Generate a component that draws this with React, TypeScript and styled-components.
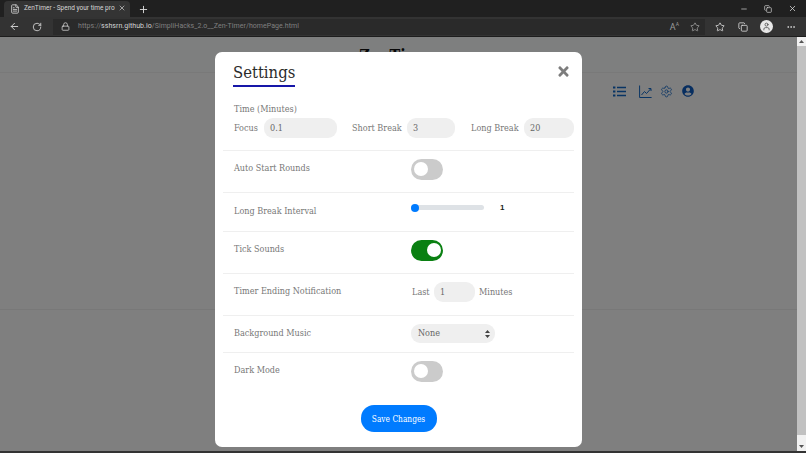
import React from "react";
import styled, { createGlobalStyle } from "styled-components";
import { ArrowLeft, RotateCw, Lock, FileText, Plus, X, Minus, Copy, Star, MoreHorizontal, Settings as Gear, User } from "lucide-react";
import { FaTimes, FaUserCircle } from "react-icons/fa";

const Global = createGlobalStyle`
  html, body { margin: 0; padding: 0; width: 806px; height: 453px; overflow: hidden; background: #808080; }
  * { box-sizing: border-box; }
`;

const slab = `"DejaVu Serif Condensed", "DejaVu Serif", serif`;

const Shell = styled.div`
  width: 806px; height: 453px; display: flex; flex-direction: column; font-family: ${slab};
`;
const TabBar = styled.div`
  height: 17px; background: #202020; display: flex; align-items: flex-end; padding-left: 4px; color: #ddd; flex: none;
`;
const Tab = styled.div`
  width: 126px; height: 16px; background: #343434; border-radius: 4px 4px 0 0; display: flex; align-items: flex-start;
  padding: 2px 6px 0; gap: 4px; font: 6.5px/10px "Roboto", sans-serif; color: #d6d6d6; white-space: nowrap; overflow: hidden;
  svg { margin-top: 1px; flex: none; }
`;
const TabTitle = styled.span`
  flex: none; width: 90px;
`;
const NewTab = styled.div`
  width: 26px; height: 15px; display: flex; align-items: center; justify-content: center;
`;
const WindowControls = styled.div`
  margin-left: auto; display: flex; align-self: stretch; align-items: center; gap: 16px; padding-right: 9px;
`;
const Toolbar = styled.div`
  height: 19px; background: #333; display: flex; align-items: center; color: #d8d8d8; flex: none;
`;
const NavIcons = styled.div`
  width: 53px; display: flex; gap: 12px; padding-left: 9px; align-items: center; flex: none;
`;
const AddressBar = styled.div`
  width: 652px; height: 16px; background: #2a2a2a; display: flex; align-items: center; gap: 8px; padding-left: 8px; flex: none;
`;
const Url = styled.span`
  font: 7px/12px "Roboto", sans-serif; color: #808080; white-space: nowrap; margin-top: -1px; letter-spacing: .05px;
  b { font-weight: 400; color: #d4d4d4; }
`;
const AddressActions = styled.div`
  margin-left: auto; display: flex; gap: 11px; padding-right: 5px; align-items: center; color: #9a9a9a;
  font: 9px "Roboto", sans-serif;
`;
const ReadAloud = styled.span`
  sup { font-size: 5px; line-height: 0; }
`;
const ToolActions = styled.div`
  flex: 1; display: flex; align-items: center; justify-content: space-between; padding: 0 10px 0 10px;
`;
const Avatar = styled.div`
  width: 13px; height: 13px; border-radius: 50%; background: #e8e8e8; color: #444; display: flex; align-items: center; justify-content: center;
`;
const Divider = styled.div`
  height: 1px; background: #1d1d1d; flex: none;
`;
const Viewport = styled.div`
  flex: 1; display: flex; min-height: 0; flex-direction: row;
`;
const Page = styled.div`
  position: relative; flex: 1; background: #fff; overflow: hidden; display: flex; flex-direction: column;
`;
const Header = styled.div`
  height: 36px; background: #fdfffe; border-bottom: 1px solid #f2f2f2; display: flex; justify-content: center; padding-top: 9px; flex: none;
`;
const Brand = styled.div`
  font: 700 16px/20px ${slab}; color: #111;
`;
const IconRow = styled.div`
  display: flex; justify-content: flex-end; align-items: flex-start; padding: 12px 103px 0 0; color: #1168c8; height: 236px; flex: none;
  svg { flex: none; }
`;
const PageIcon = styled.svg<{ $gap: number }>`
  width: 13px; height: 13px; margin-left: ${p => p.$gap}px; fill: none; stroke: currentColor;
`;
const GearSlot = styled.span`
  margin-left: 8px; display: flex;
`;
const UserSlot = styled.span`
  margin-left: 9px; display: flex; color: #0f5cc0;
`;
const FooterRule = styled.div`
  border-top: 1px solid #f0f0f0;
`;
const Overlay = styled.div`
  position: absolute; inset: 0; background: rgba(0, 0, 0, .5); display: flex; justify-content: center; padding: 15px 0 0 0;
`;
const Modal = styled.div`
  width: 367px; height: 395px; background: #fff; border-radius: 7px; display: flex; flex-direction: column; padding: 0 8px;
`;
const ModalHead = styled.div`
  display: flex; justify-content: space-between; align-items: flex-start; height: 47px; padding: 9px 3px 0 10px; flex: none;
`;
const Title = styled.h1`
  margin: 0; font: 400 16.5px/23px ${slab}; color: #2b2b2b; border-bottom: 2px solid #1616a8; height: 26px;
`;
const Close = styled.div`
  color: #7d7d7d; display: flex; margin-top: 3px;
`;
const TimeRow = styled.div`
  height: 52px; padding: 4px 0 0 11px; border-bottom: 1px solid #efefef; flex: none;
`;
const Label = styled.div`
  font: 400 9px/12px ${slab}; color: #777; white-space: nowrap;
`;
const TimeFields = styled.div`
  display: flex; align-items: center; margin-top: 3px;
`;
const FieldText = styled.span<{ $w: number; $pad?: number }>`
  font: 400 9px/12px ${slab}; color: #777; width: ${p => p.$w}px; padding-left: ${p => p.$pad ?? 0}px; flex: none; white-space: nowrap;
`;
const Input = styled.div<{ $w: number }>`
  width: ${p => p.$w}px; height: 20px; border-radius: 9px; background: #efefef; color: #666; font: 400 9px/20px ${slab};
  padding-left: 6px; flex: none;
`;
const Row = styled.div<{ $h: number; $last?: boolean }>`
  height: ${p => p.$h}px; display: grid; grid-template-columns: 188px 1fr; flex: none;
  border-bottom: ${p => (p.$last ? "none" : "1px solid #efefef")};
`;
const RowLabel = styled(Label)<{ $top: number }>`
  padding: ${p => p.$top}px 0 0 11px;
`;
const RowControl = styled.div<{ $top: number }>`
  padding-top: ${p => p.$top}px; display: flex; align-items: flex-start;
`;
const Switch = styled.div<{ $on?: boolean }>`
  width: 32px; height: 21px; border-radius: 11px; background: ${p => (p.$on ? "#0a8012" : "#cbcbcb")}; position: relative;
  &::after {
    content: ""; position: absolute; top: 3px; left: ${p => (p.$on ? "16px" : "3px")}; width: 14px; height: 14px; border-radius: 50%; background: #fff;
  }
`;
const Slider = styled.div`
  width: 73px; height: 5px; background: #dee2e6; border-radius: 3px; position: relative; margin-top: 1px;
  &::before {
    content: ""; position: absolute; left: 0; top: -1.5px; width: 8px; height: 8px; border-radius: 50%; background: #007bff;
  }
`;
const SliderValue = styled.span`
  margin-left: 16px; font: 700 8px/8px "Liberation Sans", sans-serif; color: #222;
`;
const Inline = styled.span`
  font: 400 9px/20px ${slab}; color: #777;
`;
const Last = styled(Inline)`
  width: 23px; padding-left: 1px; flex: none;
`;
const Minutes = styled(Inline)`
  margin-left: 4px;
`;
const Select = styled.div`
  width: 84px; height: 19px; border-radius: 9px; background: #efefef; color: #666; font: 400 9px/19px ${slab};
  padding: 0 5px 0 7px; display: flex; justify-content: space-between; align-items: center;
`;
const Carets = styled.svg`
  width: 5px; height: 8px; fill: #444;
`;
const Footer = styled.div`
  display: flex; justify-content: center; padding: 9px 0 0 0;
`;
const Save = styled.button`
  width: 76px; height: 27px; border: 0; border-radius: 13px; background: #007bff; color: #fff; font: 400 8.3px ${slab}; padding: 0;
`;
const Scrollbar = styled.div`
  width: 9px; background: #c1c1c1; flex: none; display: flex; flex-direction: column; justify-content: space-between;
`;
const ScrollBtn = styled.div<{ $h: number; $end?: boolean }>`
  height: ${p => p.$h}px; background: #f1f1f1; display: flex; align-items: ${p => (p.$end ? "flex-end" : "center")}; justify-content: center;
  padding-bottom: ${p => (p.$end ? "3px" : "0")};
`;
const Arrow = styled.svg`
  width: 5px; height: 3px; fill: #555;
`;
const BottomLine = styled.div`
  height: 2px; background: #333; flex: none;
`;

export default function App() {
  return (
    <Shell>
      <Global />
      <TabBar>
        <Tab>
          <FileText size={10} />
          <TabTitle>ZenTimer - Spend your time pro</TabTitle>
          <X size={8} />
        </Tab>
        <NewTab><Plus size={11} /></NewTab>
        <WindowControls>
          <Minus size={8} />
          <Copy size={8} />
          <X size={9} />
        </WindowControls>
      </TabBar>
      <Toolbar>
        <NavIcons>
          <ArrowLeft size={11} />
          <RotateCw size={10} />
        </NavIcons>
        <AddressBar>
          <Lock size={9} />
          <Url>https://<b>sshsrn.github.io</b>/SimpliHacks_2.o__Zen-Timer/homePage.html</Url>
          <AddressActions>
            <ReadAloud>A<sup>A</sup></ReadAloud>
            <Star size={10} />
          </AddressActions>
        </AddressBar>
        <ToolActions>
          <Star size={10} />
          <Copy size={10} />
          <Avatar><User size={9} /></Avatar>
          <MoreHorizontal size={10} />
        </ToolActions>
      </Toolbar>
      <Divider />
      <Viewport>
        <Page>
          <Header><Brand>ZenTimer</Brand></Header>
          <IconRow>
            <PageIcon $gap={0} viewBox="0 0 13 13">
              <path d="M4 2.5h9M4 6.5h9M4 10.5h9" strokeWidth="1.6" />
              <path d="M0 2.5h2.4M0 6.5h2.4M0 10.5h2.4" strokeWidth="2" />
            </PageIcon>
            <PageIcon $gap={13} viewBox="0 0 13 13">
              <path d="M.6.5v12h12" strokeWidth="1" />
              <path d="M2.5 10 5.5 6.5 7.5 8.5 11.5 4" strokeWidth="1" />
              <path d="M9.5 3.5h2.5V6" strokeWidth="1" />
            </PageIcon>
            <GearSlot><Gear size={13} strokeWidth={1.5} /></GearSlot>
            <UserSlot><FaUserCircle size={12} /></UserSlot>
          </IconRow>
          <FooterRule />
          <Overlay>
            <Modal>
              <ModalHead>
                <Title>Settings</Title>
                <Close><FaTimes size={15} /></Close>
              </ModalHead>
              <TimeRow>
                <Label>Time (Minutes)</Label>
                <TimeFields>
                  <FieldText $w={30}>Focus</FieldText>
                  <Input $w={73}>0.1</Input>
                  <FieldText $w={70} $pad={15}>Short Break</FieldText>
                  <Input $w={48}>3</Input>
                  <FieldText $w={69} $pad={16}>Long Break</FieldText>
                  <Input $w={50}>20</Input>
                </TimeFields>
              </TimeRow>
              <Row $h={42}>
                <RowLabel $top={11}>Auto Start Rounds</RowLabel>
                <RowControl $top={8}><Switch /></RowControl>
              </Row>
              <Row $h={39}>
                <RowLabel $top={12}>Long Break Interval</RowLabel>
                <RowControl $top={11}><Slider /><SliderValue>1</SliderValue></RowControl>
              </Row>
              <Row $h={42}>
                <RowLabel $top={11}>Tick Sounds</RowLabel>
                <RowControl $top={8}><Switch $on /></RowControl>
              </Row>
              <Row $h={42}>
                <RowLabel $top={11}>Timer Ending Notification</RowLabel>
                <RowControl $top={8}>
                  <Last>Last</Last>
                  <Input $w={41}>1</Input>
                  <Minutes>Minutes</Minutes>
                </RowControl>
              </Row>
              <Row $h={37}>
                <RowLabel $top={11}>Background Music</RowLabel>
                <RowControl $top={8}>
                  <Select>
                    None
                    <Carets viewBox="0 0 5 8"><path d="M2.5 0 5 3H0zM2.5 8 0 5h5z" /></Carets>
                  </Select>
                </RowControl>
              </Row>
              <Row $h={43} $last>
                <RowLabel $top={11}>Dark Mode</RowLabel>
                <RowControl $top={8}><Switch /></RowControl>
              </Row>
              <Footer><Save>Save Changes</Save></Footer>
            </Modal>
          </Overlay>
        </Page>
        <Scrollbar>
          <ScrollBtn $h={9}><Arrow viewBox="0 0 5 3"><path d="M2.5 0 5 3H0z" /></Arrow></ScrollBtn>
          <ScrollBtn $h={16} $end><Arrow viewBox="0 0 5 3"><path d="M0 0h5L2.5 3z" /></Arrow></ScrollBtn>
        </Scrollbar>
      </Viewport>
      <BottomLine />
    </Shell>
  );
}
